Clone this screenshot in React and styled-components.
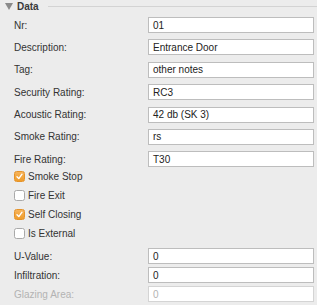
import React from "react";
import styled, { createGlobalStyle } from "styled-components";

const Global = createGlobalStyle`
  html, body { margin: 0; padding: 0; background: #ececec; }
  body { font-family: "Liberation Sans", Arial, sans-serif; font-size: 10px; color: #262626; }
`;

const Panel = styled.div`
  width: 317px;
  height: 305px;
  background: #ececec;
  overflow: hidden;
`;

const Header = styled.div`
  display: flex;
  align-items: center;
  height: 12px;
  padding-left: 5px;
  margin-bottom: 5px;
`;

const Disclosure = styled.svg`
  width: 8px;
  height: 7px;
  flex: none;
`;

const Title = styled.span`
  font-weight: bold;
  font-size: 10px;
  color: #3a3a3a;
  margin-left: 4px;
`;

const Rule = styled.div`
  flex: 1;
  height: 1px;
  background: #d3d3d3;
  margin-left: 9px;
`;

const FieldGroup = styled.div`
  display: grid;
  grid-template-columns: 148px 166px;
  row-gap: ${(p) => p.$gap}px;
  margin-top: ${(p) => p.$top || 0}px;
`;

const CheckGroup = styled.div`
  display: flex;
  flex-direction: column;
  gap: 5px;
  margin-top: 2px;
`;

const Label = styled.label`
  display: flex;
  align-items: center;
  height: 16px;
  padding-left: 14px;
  color: ${(p) => (p.$disabled ? "#b3b3b3" : "#333")};
`;

const Field = styled.div`
  box-sizing: border-box;
  height: 16px;
  display: flex;
  align-items: center;
  padding-left: 4px;
  background: #fff;
  border: 1px solid ${(p) => (p.$disabled ? "#d4d4d4" : "#bdbdbd")};
  color: ${(p) => (p.$disabled ? "#b3b3b3" : "#222")};
  white-space: nowrap;
  overflow: hidden;
`;

const CheckRow = styled.div`
  display: flex;
  align-items: center;
  height: 14px;
  padding-left: 14px;
  gap: 3px;
  color: #333;
`;

const Box = styled.span`
  box-sizing: border-box;
  width: 11px;
  height: 11px;
  border-radius: 2.5px;
  display: flex;
  align-items: center;
  justify-content: center;
  background: ${(p) => (p.$checked ? "linear-gradient(#f6b35a, #ef9c2a)" : "#fff")};
  border: 1px solid ${(p) => (p.$checked ? "#e5932a" : "#a9a9a9")};
`;

const fields1 = [
  ["Nr:", "01"],
  ["Description:", "Entrance Door"],
  ["Tag:", "other notes"],
  ["Security Rating:", "RC3"],
  ["Acoustic Rating:", "42 db (SK 3)"],
  ["Smoke Rating:", "rs"],
  ["Fire Rating:", "T30"],
];

const checks = [
  ["Smoke Stop", true],
  ["Fire Exit", false],
  ["Self Closing", true],
  ["Is External", false],
];

const fields2 = [
  ["U-Value:", "0", false],
  ["Infiltration:", "0", false],
  ["Glazing Area:", "0", true],
];

function Check({ checked }) {
  return (
    <Box $checked={checked}>
      {checked && (
        <svg width="7" height="7" viewBox="0 0 7 7">
          <path d="M1 3.8 L2.8 5.6 L6 1.2" fill="none" stroke="#fff" strokeWidth="1.4" strokeLinecap="round" strokeLinejoin="round" />
        </svg>
      )}
    </Box>
  );
}

function Rows({ items }) {
  return items.map(([l, v, d]) => (
    <React.Fragment key={l}>
      <Label $disabled={d}>{l}</Label>
      <Field $disabled={d}>{v}</Field>
    </React.Fragment>
  ));
}

export default function App() {
  return (
    <>
      <Global />
      <Panel>
        <Header>
          <Disclosure viewBox="0 0 8 7">
            <path d="M0 0 H8 L4 7 Z" fill="#8a8a8a" />
          </Disclosure>
          <Title>Data</Title>
          <Rule />
        </Header>
        <FieldGroup $gap={6.4}>
          <Rows items={fields1} />
        </FieldGroup>
        <CheckGroup>
          {checks.map(([l, c]) => (
            <CheckRow key={l}>
              <Check checked={c} />
              <span>{l}</span>
            </CheckRow>
          ))}
        </CheckGroup>
        <FieldGroup $gap={3} $top={8}>
          <Rows items={fields2} />
        </FieldGroup>
      </Panel>
    </>
  );
}
